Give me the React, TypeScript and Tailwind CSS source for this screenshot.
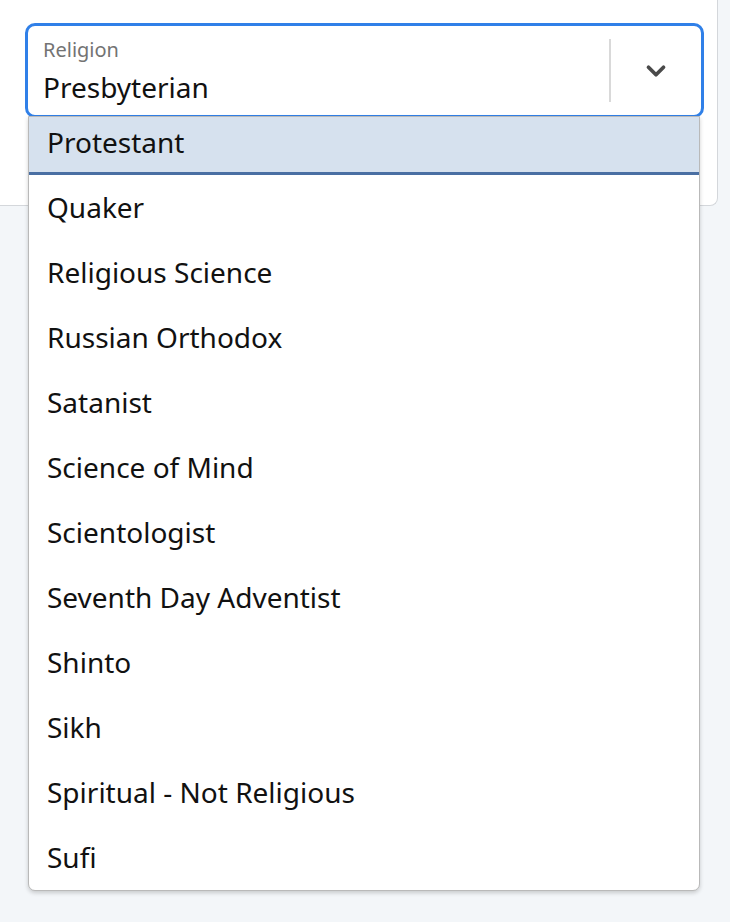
import { ChevronDown } from 'lucide-react';

const options = [
  'Quaker',
  'Religious Science',
  'Russian Orthodox',
  'Satanist',
  'Science of Mind',
  'Scientologist',
  'Seventh Day Adventist',
  'Shinto',
  'Sikh',
  'Spiritual - Not Religious',
  'Sufi',
];

export default function App() {
  return (
    <div
      className="w-[730px] h-[922px] bg-[#f3f6f9] overflow-hidden"
      style={{ fontFamily: '"Noto Sans", sans-serif' }}
    >
      <div className="w-[718px] h-[206px] bg-white border-r border-b border-[#d4d7db] rounded-br-lg pl-[25px] pt-[23px]">
        <div className="relative w-[679px]">
          {/* Select control */}
          <div className="h-[95px] flex items-stretch border-[3px] border-[#3080e8] rounded-[10px] bg-white">
            <div className="flex-1 pl-[15px] pt-[12px]">
              <div className="text-[20px] leading-[24px] text-[#737373]">Religion</div>
              <div className="text-[28px] leading-[34px] text-[#111] mt-[8px]">Presbyterian</div>
            </div>
            <div className="self-center w-[2px] h-[63px] bg-[#d9d9d9]" />
            <div className="w-[90px] flex items-center justify-center">
              <ChevronDown className="w-[30px] h-[30px] text-[#4a4a4a]" strokeWidth={3} />
            </div>
          </div>

          {/* Open menu */}
          <div className="absolute left-[3px] top-[93px] w-[672px] bg-white border border-[#b9b9b9] rounded-b-[7px] shadow-[0_2px_4px_rgba(0,0,0,0.18)] overflow-hidden">
            <div className="h-[58px] bg-[#d6e1ee] border-b-[3px] border-[#4a6fa3] flex items-center pl-[18px] pb-[5px] text-[28px] text-[#111]">
              Protestant
            </div>
            {options.map((o) => (
              <div key={o} className="h-[65px] flex items-center pl-[18px] pb-[2px] text-[28px] text-[#111]">
                {o}
              </div>
            ))}
          </div>
        </div>
      </div>
    </div>
  );
}
